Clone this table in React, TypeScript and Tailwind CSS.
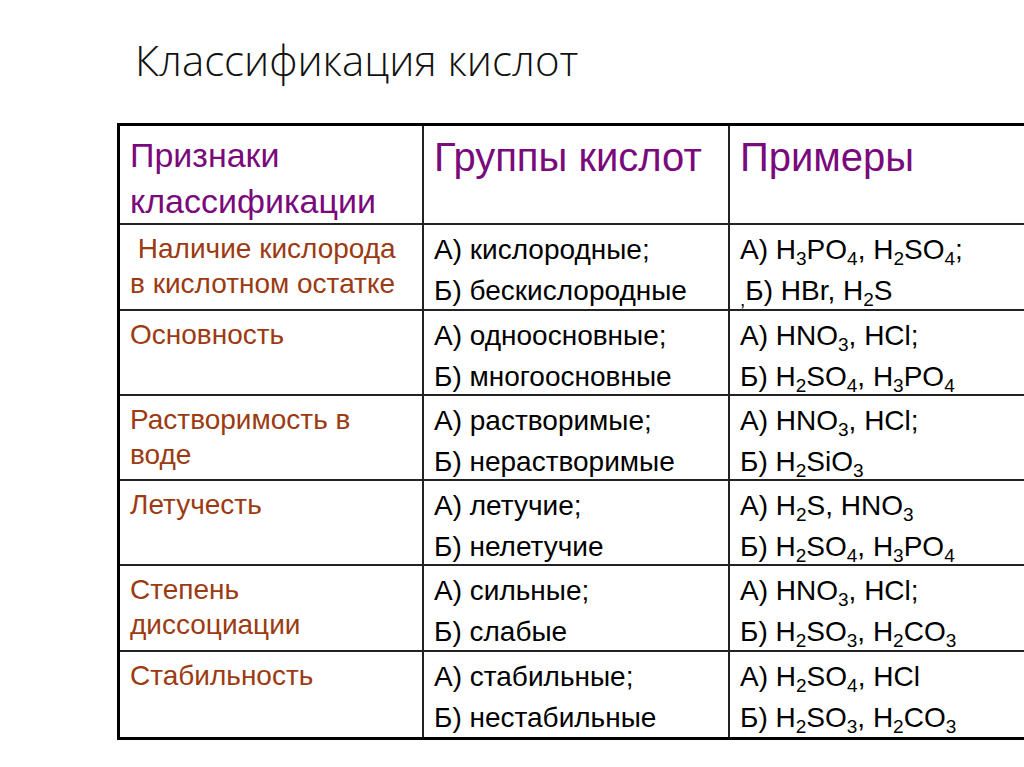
const arial = { fontFamily: '"Liberation Sans", Arial, sans-serif' };

type Part = string | { sub: string };

const rows: { label: string[]; groups: string[]; examples: Part[][] }[] = [
  {
    label: ["\u00a0Наличие кислорода", "в кислотном остатке"],
    groups: ["А) кислородные;", "Б) бескислородные"],
    examples: [
      ["А) H", { sub: "3" }, "PO", { sub: "4" }, ", H", { sub: "2" }, "SO", { sub: "4" }, ";"],
      [{ sub: "," }, "Б) HBr, H", { sub: "2" }, "S"],
    ],
  },
  {
    label: ["Основность"],
    groups: ["А) одноосновные;", "Б) многоосновные"],
    examples: [
      ["А) HNO", { sub: "3" }, ", HCl;"],
      ["Б) H", { sub: "2" }, "SO", { sub: "4" }, ", H", { sub: "3" }, "PO", { sub: "4" }],
    ],
  },
  {
    label: ["Растворимость в", "воде"],
    groups: ["А) растворимые;", "Б) нерастворимые"],
    examples: [
      ["А) HNO", { sub: "3" }, ", HCl;"],
      ["Б) H", { sub: "2" }, "SiO", { sub: "3" }],
    ],
  },
  {
    label: ["Летучесть"],
    groups: ["А) летучие;", "Б) нелетучие"],
    examples: [
      ["А) H", { sub: "2" }, "S, HNO", { sub: "3" }],
      ["Б) H", { sub: "2" }, "SO", { sub: "4" }, ", H", { sub: "3" }, "PO", { sub: "4" }],
    ],
  },
  {
    label: ["Степень", "диссоциации"],
    groups: ["А) сильные;", "Б) слабые"],
    examples: [
      ["А) HNO", { sub: "3" }, ", HCl;"],
      ["Б) H", { sub: "2" }, "SO", { sub: "3" }, ", H", { sub: "2" }, "CO", { sub: "3" }],
    ],
  },
  {
    label: ["Стабильность"],
    groups: ["А) стабильные;", "Б) нестабильные"],
    examples: [
      ["А) H", { sub: "2" }, "SO", { sub: "4" }, ", HCl"],
      ["Б) H", { sub: "2" }, "SO", { sub: "3" }, ", H", { sub: "2" }, "CO", { sub: "3" }],
    ],
  },
];

const heights = ["h-[86px]", "h-[85px]", "h-[85px]", "h-[85px]", "h-[86px]", "h-[85px]"];

function Formula({ parts }: { parts: Part[] }) {
  return (
    <div className="whitespace-pre">
      {parts.map((p, i) =>
        typeof p === "string" ? (
          <span key={i}>{p}</span>
        ) : (
          <sub key={i} className="text-[19px] -bottom-[6px]">{p.sub}</sub>
        )
      )}
    </div>
  );
}

export default function App() {
  return (
    <div className="w-[1024px] h-[767px] bg-white overflow-hidden relative">
      <h1
        className="pl-[135px] pt-[34px] h-[123px] text-[42px] font-light text-[#111] leading-[52px]"
        style={{ fontFamily: '"Open Sans", Lato, sans-serif' }}
      >
        Классификация кислот
      </h1>

      <div className="ml-[117px] w-[930px] border-[3px] border-black" style={arial}>
        <div className="flex h-[99px] border-b-2 border-[#222]">
          <div className="w-[304px] shrink-0 border-r-2 border-[#222] pl-[10px] pt-[6px] text-[34px] leading-[46px] text-[#7a0a7c]">
            <div>Признаки</div>
            <div>классификации</div>
          </div>
          <div className="w-[306px] shrink-0 border-r-2 border-[#222] pl-[10px] pt-[9px] text-[40px] leading-[44px] text-[#7a0a7c]">
            Группы кислот
          </div>
          <div className="flex-1 pl-[10px] pt-[9px] text-[40px] leading-[44px] text-[#7a0a7c]">
            Примеры
          </div>
        </div>

        {rows.map((r, i) => (
          <div
            key={i}
            className={`flex ${heights[i]} ${i < rows.length - 1 ? "border-b-2 border-[#222]" : ""}`}
          >
            <div className="w-[304px] shrink-0 border-r-2 border-[#222] pl-[10px] pt-[6px] text-[28px] leading-[35px] text-[#9c3a12]">
              {r.label.map((l) => (
                <div key={l} className="whitespace-pre">{l}</div>
              ))}
            </div>
            <div className="w-[306px] shrink-0 border-r-2 border-[#222] pl-[10px] pt-[4px] text-[28px] leading-[41px] text-black">
              {r.groups.map((g) => (
                <div key={g}>{g}</div>
              ))}
            </div>
            <div className="flex-1 pl-[10px] pt-[4px] text-[28px] leading-[41px] text-black">
              {r.examples.map((e, j) => (
                <Formula key={j} parts={e} />
              ))}
            </div>
          </div>
        ))}
      </div>
    </div>
  );
}
